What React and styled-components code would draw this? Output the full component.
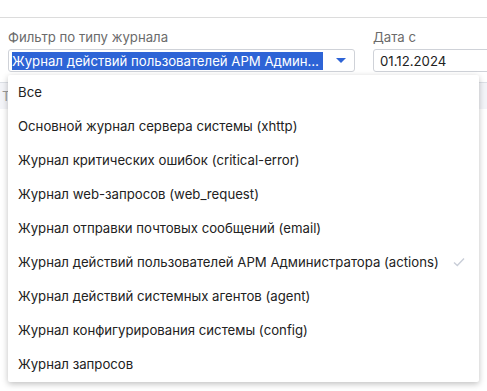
import styled, { createGlobalStyle } from 'styled-components';

const GlobalStyle = createGlobalStyle`
    body{
        margin: 0;
        background: #fff;
        font-family: Inter, "Noto Sans", sans-serif;
        color: #222;
    }
`

const Page = styled.div`
    position: relative;
    width: 487px;
    height: 374px;
    overflow: hidden;
    border-top: 1px solid #dcdcdc;
    margin-top: 17px;
    box-sizing: border-box;
`

const Filters = styled.div`
    display: flex;
    gap: 18px;
    padding: 11px 0 0 8px;
`

const Field = styled.div`
    display: flex;
    flex-direction: column;
    gap: 4px;
    width: ${p => p.width}px;
    flex-shrink: 0;
`

const Label = styled.div`
    font-size: 13.2px;
    color: #6b6b6b;
    line-height: 16px;
`

const Box = styled.div`
    display: flex;
    align-items: center;
    height: 23px;
    border: 1px solid #cfd2d8;
    border-radius: 3px;
    padding: 0 3px;
    font-size: 13.2px;
    box-sizing: border-box;
    background: #fff;
`

const Selected = styled.span`
    background: #2e64d6;
    color: #fff;
    white-space: nowrap;
    line-height: 18px;
    width: 311px;
    overflow: hidden;
    text-overflow: ellipsis;
`

const Arrow = styled.span`
    margin-left: auto;
    margin-right: 5px;
    width: 0;
    height: 0;
    border-left: 5px solid transparent;
    border-right: 5px solid transparent;
    border-top: 5px solid #2e64d6;
`

const DateText = styled.span`
    padding-left: 3px;
`

const TableHead = styled.div`
    margin-top: 10px;
    height: 26px;
    border-top: 1px solid #dde0e6;
    background: #f3f4f8;
    font-size: 13px;
    color: #999;
    padding-left: 2px;
    line-height: 26px;
`

const Menu = styled.ul`
    position: absolute;
    left: 8px;
    top: 57px;
    width: 471px;
    margin: 0;
    padding: 0;
    list-style: none;
    background: #fff;
    border-radius: 2px;
    box-shadow: 0 2px 6px rgba(0, 0, 0, 0.25);
    padding: 0 0 1px 0;
`

const Item = styled.li`
    display: flex;
    align-items: center;
    height: 34px;
    padding-left: 10px;
    padding-right: 14px;
    font-size: 13.2px;
    color: #222;
    white-space: nowrap;
`

const Check = styled.svg`
    margin-left: auto;
    width: 12px;
    height: 10px;
`

const items = [
    'Все',
    'Основной журнал сервера системы (xhttp)',
    'Журнал критических ошибок (critical-error)',
    'Журнал web-запросов (web_request)',
    'Журнал отправки почтовых сообщений (email)',
    'Журнал действий пользователей АРМ Администратора (actions)',
    'Журнал действий системных агентов (agent)',
    'Журнал конфигурирования системы (config)',
    'Журнал запросов',
]

const App = () => {
    const active = 5;
    return (
        <Page>
            <GlobalStyle />
            <Filters>
                <Field width={347}>
                    <Label>Фильтр по типу журнала</Label>
                    <Box>
                        <Selected>Журнал действий пользователей АРМ Администратора (actions)</Selected>
                        <Arrow />
                    </Box>
                </Field>
                <Field width={130}>
                    <Label>Дата с</Label>
                    <Box>
                        <DateText>01.12.2024</DateText>
                    </Box>
                </Field>
            </Filters>
            <TableHead>Т</TableHead>

            <Menu>
                {items.map((t, i) => (
                    <Item key={i}>
                        {t}
                        {i === active && (
                            <Check viewBox="0 0 12 10">
                                <path d="M1 5.5 L4.3 8.5 L11 1.5" fill="none" stroke="#c9ced8" strokeWidth="1.4" />
                            </Check>
                        )}
                    </Item>
                ))}
            </Menu>
        </Page>
    )
}

export default App;
